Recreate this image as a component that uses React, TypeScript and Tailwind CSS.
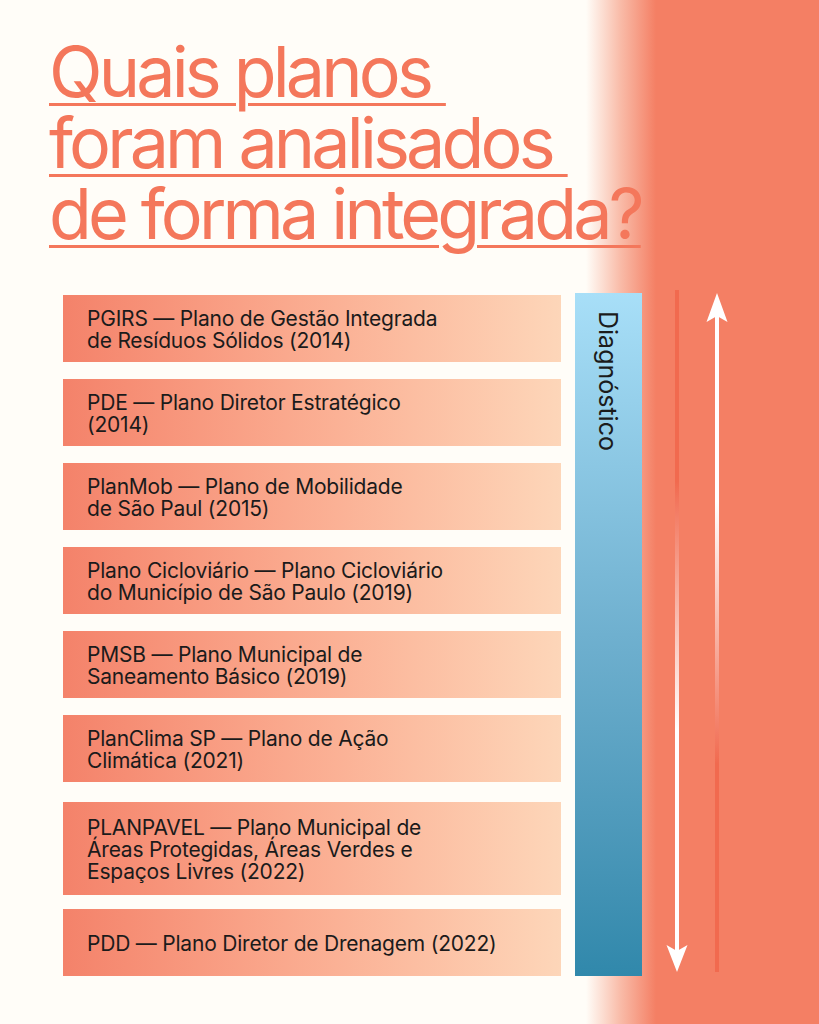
import React from 'react';

const planos = [
  { lines: ['PGIRS — Plano de Gestão Integrada', 'de Resíduos Sólidos (2014)'], tall: false },
  { lines: ['PDE — Plano Diretor Estratégico', '(2014)'], tall: false },
  { lines: ['PlanMob — Plano de Mobilidade', 'de São Paul (2015)'], tall: false },
  { lines: ['Plano Cicloviário — Plano Cicloviário', 'do Município de São Paulo (2019)'], tall: false },
  { lines: ['PMSB — Plano Municipal de', 'Saneamento Básico (2019)'], tall: false },
  { lines: ['PlanClima SP — Plano de Ação', 'Climática (2021)'], tall: false },
  {
    lines: ['PLANPAVEL — Plano Municipal de', 'Áreas Protegidas, Áreas Verdes e', 'Espaços Livres (2022)'],
    tall: true,
  },
  { lines: ['PDD — Plano Diretor de Drenagem (2022)'], tall: false },
];

const titulo = ['Quais planos ', 'foram analisados ', 'de forma integrada?'];

function Setas() {
  return (
    <svg width="70" height="690" viewBox="0 0 70 690" className="-mt-[5px] ml-[18px] shrink-0">
      <defs>
        <linearGradient id="desce" gradientUnits="userSpaceOnUse" x1="0" y1="0" x2="0" y2="690">
          <stop offset="0.28" stopColor="#f16a4f" />
          <stop offset="0.64" stopColor="#ffffff" />
        </linearGradient>
        <linearGradient id="sobe" gradientUnits="userSpaceOnUse" x1="0" y1="0" x2="0" y2="690">
          <stop offset="0.31" stopColor="#ffffff" />
          <stop offset="0.69" stopColor="#f16a4f" />
        </linearGradient>
      </defs>
      {/* seta para baixo */}
      <line x1="17" y1="2" x2="17" y2="668" stroke="url(#desce)" strokeWidth="4" />
      <path d="M17 684 L27.5 657 L17 663 L6.5 657 Z" fill="#ffffff" />
      {/* seta para cima */}
      <line x1="57" y1="26" x2="57" y2="684" stroke="url(#sobe)" strokeWidth="4" />
      <path d="M57 5 L67.5 34 L57 28 L46.5 34 Z" fill="#ffffff" />
    </svg>
  );
}

export default function App() {
  return (
    <div className="h-[1024px] w-[819px] overflow-hidden bg-[linear-gradient(90deg,#fffdf8_586px,#f9bca9_620px,#f47f64_656px)] font-['Inter',sans-serif]">
      <h1 className="pl-[49px] pt-[36px] text-[70px] font-normal leading-[71px] tracking-[-0.055em] text-[#f4775b]">
        {titulo.map((linha) => (
          <span key={linha} className="block h-[71px]">
            <span className="whitespace-pre underline decoration-[3px] underline-offset-[6px]">{linha}</span>
          </span>
        ))}
      </h1>

      <div className="mt-[44px] flex items-start pl-[63px]">
        <div className="mt-[2px] flex w-[498px] flex-col gap-[17px]">
          {planos.map((p) => (
            <div
              key={p.lines[0]}
              className={`flex items-center bg-linear-to-r from-[#f4826a] to-[#fdd6b9] pl-[24px] pt-[3px] text-[21px] leading-[22px] tracking-[-0.01em] text-[#1b1b1b] ${
                p.tall ? '-mb-[3px] mt-[3px] h-[93px]' : 'h-[67px]'
              }`}
            >
              <p>
                {p.lines.map((l, i) => (
                  <span key={i} className="block">
                    {l}
                  </span>
                ))}
              </p>
            </div>
          ))}
        </div>

        <div className="ml-[14px] h-[683px] w-[67px] shrink-0 bg-linear-to-b from-[#a8dff8] via-[#6fb0cf] to-[#3088ab] pt-[18px]">
          <span className="block pl-[19px] text-[25px] leading-[28px] text-[#1b1b1b] [writing-mode:vertical-rl]">
            Diagnóstico
          </span>
        </div>

        <Setas />
      </div>
    </div>
  );
}
